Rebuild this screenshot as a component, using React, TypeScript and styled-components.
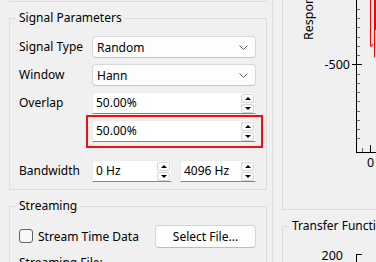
import React, { FC } from "react";
import styled, { createGlobalStyle } from "styled-components";

const GlobalStyle = createGlobalStyle`
  html, body {
    margin: 0;
    padding: 0;
    background: #f0f0f0;
  }

  body {
    font-family: "Noto Sans", "Segoe UI", sans-serif;
    font-size: 12px;
    color: #000;
  }
`;

const Window = styled.div`
  display: flex;
  width: 376px;
  height: 262px;
  overflow: hidden;
  background: #f0f0f0;
`;

const LeftPane = styled.div`
  flex: 0 0 273px;
  box-sizing: border-box;
  padding: 0 5px 0 9px;
  border-right: 1px solid #dcdcdc;
`;

const RightPane = styled.div`
  flex: 0 0 auto;
  display: flex;
  flex-direction: column;
  padding-left: 9px;
`;

const ClippedBox = styled.div`
  height: 1px;
  border: 1px solid #dcdcdc;
  border-top: none;
`;

const GroupBox = styled.fieldset<{ $wide?: boolean }>`
  margin: 8px 0 0;
  padding: 0 10px 0 9px;
  min-width: 0;
  border: 1px solid #dcdcdc;
  width: ${(p) => (p.$wide ? "400px" : "auto")};
  box-sizing: border-box;
  flex-shrink: 0;

  legend {
    padding: 0 3px;
    margin-left: -3px;
    line-height: 16px;
    font-size: 12px;
  }
`;

const FormGrid = styled.div`
  display: grid;
  grid-template-columns: 73px 1fr;
  grid-template-rows: repeat(4, 22px) 34px;
  row-gap: 6px;
  padding: 10px 0 7px;
`;

const Label = styled.span`
  align-self: end;
  line-height: 22px;
  white-space: nowrap;
`;

const Field = styled.div`
  position: relative;
  align-self: end;
  height: 22px;
`;

const Combo = styled.div`
  display: flex;
  align-items: center;
  justify-content: space-between;
  height: 22px;
  box-sizing: border-box;
  padding: 0 7px 0 4px;
  background: #fdfdfd;
  border: 1px solid #d9d9d9;
  border-bottom-color: #c4c4c4;
  border-radius: 4px;
`;

const Spin = styled.div`
  display: flex;
  align-items: center;
  height: 22px;
  box-sizing: border-box;
  padding: 0 1px 0 3px;
  background: #fff;
  border: 1px solid #ececec;
  border-bottom-color: #878787;
  border-radius: 3px 3px 0 0;
`;

const SpinText = styled.span`
  flex: 1;
  line-height: 16px;
  white-space: nowrap;
`;

const SpinButtons = styled.div`
  display: flex;
  flex-direction: column;
  gap: 1px;
`;

const SpinButton = styled.div<{ $down?: boolean }>`
  display: flex;
  align-items: center;
  justify-content: center;
  width: 13px;
  height: 9px;
  box-sizing: border-box;
  background: #fbfbfb;
  border: 1px solid #d4d4d4;
  border-radius: 2px;

  &::after {
    content: "";
    border-left: 3px solid transparent;
    border-right: 3px solid transparent;
    ${(p) =>
      p.$down ? "border-top: 3px solid #000;" : "border-bottom: 3px solid #000;"}
  }
`;

const PairRow = styled.div`
  display: grid;
  grid-template-columns: 80px 1fr;
  column-gap: 8px;
`;

const Highlight = styled.div`
  position: absolute;
  top: -5px;
  left: -6px;
  right: -7px;
  bottom: -6px;
  border: 2px solid #f01010;
  pointer-events: none;
`;

const StreamRow = styled.div`
  display: flex;
  align-items: center;
  height: 22px;
  margin-top: 11px;
`;

const Check = styled.span`
  width: 14px;
  height: 14px;
  box-sizing: border-box;
  border: 1px solid #626262;
  border-radius: 3px;
  background: #f7f7f7;
  margin-right: 5px;
`;

const PushButton = styled.div`
  display: flex;
  align-items: center;
  justify-content: center;
  margin-left: auto;
  width: 101px;
  height: 23px;
  box-sizing: border-box;
  background: #fdfdfd;
  border: 1px solid #d4d4d4;
  border-bottom-color: #bdbdbd;
  border-radius: 4px;
`;

const FileLabel = styled.div`
  margin-top: 8px;
  line-height: 16px;
`;

const ChartBox = styled.div`
  flex-shrink: 0;
  width: 400px;
  height: 210px;
  box-sizing: border-box;
  border: 1px solid #dcdcdc;
  border-top: none;
`;

const ChartSvg = styled.svg`
  display: block;
  font-family: "Noto Sans", "Segoe UI", sans-serif;
  font-size: 12px;
`;

const TransferBox = styled(GroupBox)`
  padding: 0;

  legend {
    margin-left: 6px;
  }
`;

const Chevron: FC = () => (
  <svg width="9" height="5" viewBox="0 0 9 5">
    <polyline points="0.5,0.5 4.5,4.5 8.5,0.5" fill="none" stroke="#606060" strokeWidth="1" />
  </svg>
);

const SpinBox: FC<{ value: string }> = ({ value }) => (
  <Spin>
    <SpinText>{value}</SpinText>
    <SpinButtons>
      <SpinButton />
      <SpinButton $down />
    </SpinButtons>
  </Spin>
);

const minorTicks = [-6, -5, -4, -3, -2, -1, 1, 2, 3, 4, 5, 6, 7, 8].map((k) =>
  Math.round(64.3 + k * 9.25) + 0.5
);

const ResponseChart: FC = () => (
  <ChartSvg width="120" height="209">
    <text transform="translate(30,40) rotate(-90)" fontSize="12.5">
      Response (dB)
    </text>
    <text x="67" y="68.5" textAnchor="end" fontSize="12.5">
      -500
    </text>
    <line x1="73.5" y1="0" x2="73.5" y2="153" stroke="#000" />
    <line x1="73" y1="152.5" x2="120" y2="152.5" stroke="#000" />
    <line x1="69" y1="64.5" x2="79" y2="64.5" stroke="#000" />
    {minorTicks.map((y) => (
      <line key={y} x1="74" y1={y} x2="77" y2={y} stroke="#6e6e6e" />
    ))}
    <line x1="79.5" y1="148" x2="79.5" y2="152" stroke="#6e6e6e" />
    <line x1="87.5" y1="145" x2="87.5" y2="152" stroke="#000" />
    <text x="87.5" y="167" textAnchor="middle" fontSize="12.5">
      0
    </text>
    <polyline points="87.5,0 87.5,46 88.5,47 89.5,44" fill="none" stroke="#ff0000" />
    <polyline points="91.5,0 91.5,57" fill="none" stroke="#ff0000" />
    <polyline points="92.5,0 92.5,30" fill="none" stroke="#ff0000" />
  </ChartSvg>
);

const TransferChart: FC = () => (
  <ChartSvg width="120" height="40">
    <text x="60" y="25.5" textAnchor="end" fontSize="12.5">
      200
    </text>
    <line x1="73.5" y1="20" x2="73.5" y2="40" stroke="#000" />
    <line x1="73" y1="20.5" x2="79" y2="20.5" stroke="#000" />
  </ChartSvg>
);

const App: FC = () => (
  <Window>
    <GlobalStyle />
    <LeftPane>
      <ClippedBox />
      <GroupBox>
        <legend>Signal Parameters</legend>
        <FormGrid>
          <Label>Signal Type</Label>
          <Combo>
            <span>Random</span>
            <Chevron />
          </Combo>
          <Label>Window</Label>
          <Combo>
            <span>Hann</span>
            <Chevron />
          </Combo>
          <Label>Overlap</Label>
          <Field>
            <SpinBox value="50.00%" />
          </Field>
          <span />
          <Field>
            <SpinBox value="50.00%" />
            <Highlight />
          </Field>
          <Label>Bandwidth</Label>
          <Field>
            <PairRow>
              <SpinBox value="0 Hz" />
              <SpinBox value="4096 Hz" />
            </PairRow>
          </Field>
        </FormGrid>
      </GroupBox>
      <GroupBox>
        <legend>Streaming</legend>
        <StreamRow>
          <Check />
          <span>Stream Time Data</span>
          <PushButton>Select File...</PushButton>
        </StreamRow>
        <FileLabel>Streaming File:</FileLabel>
      </GroupBox>
    </LeftPane>
    <RightPane>
      <ChartBox>
        <ResponseChart />
      </ChartBox>
      <TransferBox $wide>
        <legend>Transfer Function</legend>
        <TransferChart />
      </TransferBox>
    </RightPane>
  </Window>
);

export default App;
